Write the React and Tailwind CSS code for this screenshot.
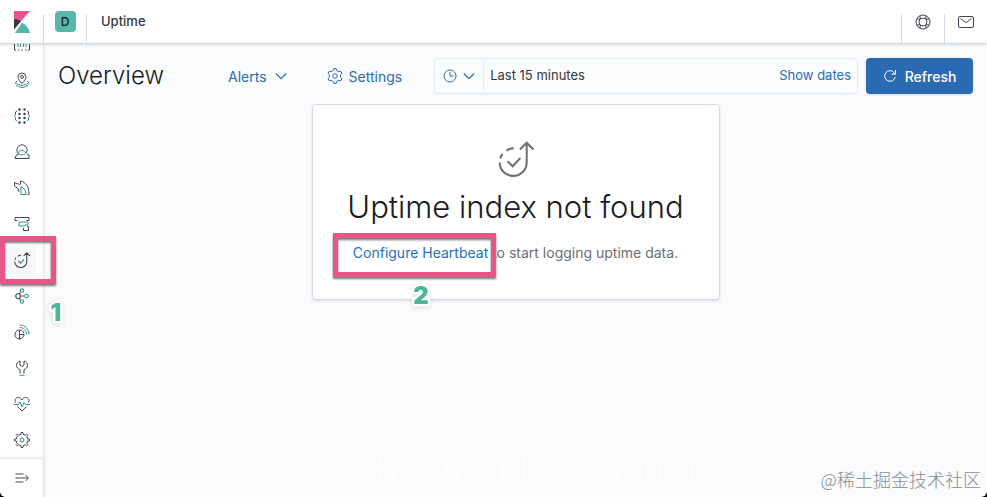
import React from 'react'

const DARK = '#43464e'
const TEAL = '#2f9484'

function Icon({ children, size = 'size-4', box = '0 0 32 32', width = 2 }) {
  return (
    <svg viewBox={box} className={size} fill="none" stroke={DARK} strokeWidth={width} aria-hidden="true">
      {children}
    </svg>
  )
}

// Outline of a cog centred on 16,16
function cog(teeth, outer, inner, top, bottom) {
  const step = (Math.PI * 2) / teeth
  const at = (r, a) => `${(16 + r * Math.sin(a)).toFixed(2)} ${(16 - r * Math.cos(a)).toFixed(2)}`
  const points = []
  for (let i = 0; i < teeth; i++) {
    const a = i * step
    points.push(at(inner, a - step * bottom), at(outer, a - step * top), at(outer, a + step * top), at(inner, a + step * bottom))
  }
  return `M${points.join('L')}Z`
}

const COG_8 = cog(8, 15, 11.5, 0.16, 0.24)
const COG_6 = cog(6, 15, 11.5, 0.16, 0.28)

const CanvasIcon = () => (
  <Icon>
    <path d="M1 4h30v24h-3M1 4v24h3M8 28h3M15 28h3M22 28h3" />
    <path stroke={TEAL} d="M8 22v-6M13 22V12M19 22v-8M24 22V12" />
  </Icon>
)

const MapsIcon = () => (
  <Icon>
    <path d="M16 23c-5-5-8-9-8-13a8 8 0 0 1 16 0c0 4-3 8-8 13z" />
    <circle cx="16" cy="10" r="3" />
    <path stroke={TEAL} d="M6 18l-4 4c4 0 4 3 7 3s4 2 7 2 4-2 7-2 3-3 7-3l-4-4M4 27c4 0 6 4 12 4s8-4 12-4" />
  </Icon>
)

const MachineLearningIcon = () => (
  <Icon>
    <g fill={DARK} stroke="none">
      <circle cx="11" cy="3" r="2.500" />
      <circle cx="21" cy="3" r="2.500" />
      <circle cx="11" cy="12" r="2.500" />
      <circle cx="21" cy="12" r="2.500" />
      <circle cx="11" cy="20" r="2.500" />
      <circle cx="21" cy="20" r="2.500" />
      <circle cx="11" cy="29" r="2.500" />
      <circle cx="21" cy="29" r="2.500" />
    </g>
    <path d="M6 6L3 8v5M26 6l3 2v5" />
    <path stroke={TEAL} d="M6 26l-3-2v-5l-2-3 2-3M26 26l3-2v-5l2-3-2-3" />
  </Icon>
)

const MetricsIcon = () => (
  <Icon>
    <path d="M8 18a10 10 0 1 1 16 0M10 20l-6 3-2 6h28v-7l-4-2" />
    <path stroke={TEAL} d="M8 18c3-7 13-7 16 0-3 5-13 5-16 0z" />
  </Icon>
)

const LogsIcon = () => (
  <Icon>
    <path d="M11 22H8l1-4-8-6V5l10 4" />
    <path d="M13 9V2c11 3 17 11 17 27h-3" />
    <path stroke={TEAL} d="M14 13v16h10c0-8-4-13-10-16z" />
  </Icon>
)

const ApmIcon = () => (
  <Icon>
    <path d="M7 9H2V3h28v6h-5M19 24v5h10v-8h-3" />
    <path stroke={TEAL} d="M10 12h18v6h-6l-1 2H10z" />
  </Icon>
)

const UptimeGlyph = ({ size, stroke = DARK, width }) => (
  <svg viewBox="0 0 32 32" className={size} fill="none" stroke={stroke} strokeWidth={width} aria-hidden="true">
    <path d="M1.500 19a11.500 11.500 0 0 0 24 0V2M19.500 7.500l6-6 6 6" />
    <path d="M2 15.500a12 12 0 0 1 2-4M7.500 8.500A12 12 0 0 1 14 6.500" />
    <path stroke={stroke === DARK ? TEAL : stroke} d="M8.500 18l4.500 4.500 7-7.500" />
  </svg>
)

const SiemIcon = () => (
  <Icon width={2.2}>
    <path d="M12 12.500A5 5 0 1 0 12 20M12 9v14M12 16h8" />
    <circle cx="16" cy="5" r="3.500" stroke={TEAL} />
    <circle cx="25" cy="16" r="3.500" stroke={TEAL} />
    <circle cx="16" cy="27" r="3.500" stroke={TEAL} />
  </Icon>
)

const GraphIcon = () => (
  <Icon>
    <path d="M11 12a9 9 0 1 0 9 9h-9zM11 21v9M12 12c4 0 7 3 8 7" />
    <path stroke={TEAL} d="M11 7c8 0 14 6 14 14M11 2c11 0 19 8 19 19" />
  </Icon>
)

const WrenchIcon = () => (
  <Icon>
    <path d="M12 27v-8c-4-1-7-4-7-8s3-8 7-9v8l4 3 4-3V2c4 1 7 5 7 9s-3 7-7 8v8" />
    <path stroke={TEAL} d="M11 30.500h10" />
  </Icon>
)

const HeartIcon = () => (
  <Icon>
    <path d="M3 13C0 6 5 3 9 3c3 0 6 2 7 5 1-3 4-5 7-5 4 0 9 3 6 10M7 21l9 9 9-9" />
    <path stroke={TEAL} d="M0 17h9l3-5 4 10 4-9 3 4h9" />
  </Icon>
)

const ManagementIcon = () => (
  <Icon>
    <path strokeLinejoin="round" d={COG_8} />
    <circle cx="16" cy="16" r="4" stroke={TEAL} />
  </Icon>
)

const NAV = [
  { label: 'Canvas', icon: <CanvasIcon /> },
  { label: 'Maps', icon: <MapsIcon /> },
  { label: 'Machine Learning', icon: <MachineLearningIcon /> },
  { label: 'Metrics', icon: <MetricsIcon /> },
  { label: 'Logs', icon: <LogsIcon /> },
  { label: 'APM', icon: <ApmIcon /> },
  { label: 'Uptime', icon: <UptimeGlyph size="size-4" width={2.2} />, active: true },
  { label: 'SIEM', icon: <SiemIcon /> },
  { label: 'Graph', icon: <GraphIcon /> },
  { label: 'Dev Tools', icon: <WrenchIcon /> },
  { label: 'Stack Monitoring', icon: <HeartIcon /> },
  { label: 'Management', icon: <ManagementIcon /> },
]

const Chevron = () => (
  <svg viewBox="0 0 12 12" className="size-3" fill="none" stroke="currentColor" strokeWidth="1.200" aria-hidden="true">
    <path d="M.8 3.500L6 8.700l5.200-5.200" />
  </svg>
)

// Pink frame used for the tutorial steps
const Frame = ({ className }) => (
  <span
    className={`pointer-events-none absolute z-20 border-5 border-[#e85688] drop-shadow-[0_2px_1px_rgba(60,60,60,0.7)] ${className}`}
  />
)

const Step = ({ n, className }) => (
  <svg viewBox="0 0 24 28" className={`pointer-events-none absolute z-20 h-7 w-6 drop-shadow-sm ${className}`}>
    <text
      x="12"
      y="23"
      textAnchor="middle"
      className="fill-[#4db597] stroke-white font-black"
      fontSize="24"
      strokeWidth="5"
      strokeLinejoin="round"
      paintOrder="stroke"
    >
      {n}
    </text>
  </svg>
)

function Header() {
  return (
    <header className="relative z-10 flex h-11 shrink-0 items-stretch border-b border-[#d3dae0] bg-white shadow-sm">
      <a href="#home" aria-label="Kibana" className="flex w-[43px] items-center justify-center">
        <svg viewBox="0 0 16 22" className="h-[22px] w-4" aria-hidden="true">
          <path fill="#e8558c" d="M0 0h16L0 18z" />
          <path fill="#343741" d="M0 8c3 0 5 1 7 2.300L0 18.500z" />
          <path fill="#4fb9a5" d="M8 11.500c4 2.300 7 6 8 10.500H1z" />
        </svg>
      </a>
      <div className="mt-3.5 border-l border-[#d3dae6]" />
      <button aria-label="Default space" className="flex w-[42px] items-center justify-center">
        <span className="flex size-[21px] items-center justify-center rounded bg-[#54b9a6] text-xs font-medium text-[#1a1c21]">
          D
        </span>
      </button>
      <div className="mt-3.5 border-l border-[#d3dae6]" />
      <span className="self-center pl-3.5 text-[13px] font-medium text-[#343741]">Uptime</span>
      <div className="ml-auto flex">
        <button aria-label="Help" className="mt-3.5 flex w-[43px] justify-center border-l border-[#d3dae6]">
          <Icon box="0 0 16 16" width={1}>
            <circle cx="8" cy="8" r="7" />
            <circle cx="8" cy="8" r="4" />
            <path d="M5.300 5L5 1.700M10.700 5L11 1.700M5.300 11L5 14.300M10.700 11l.3 3.300M5 5.300L1.700 5M11 5.300l3.300-.3M5 10.700l-3.300.3M11 10.700l3.300.3" />
          </Icon>
        </button>
        <button aria-label="News" className="mt-3.5 flex w-[43px] justify-center border-l border-[#d3dae6]">
          <Icon box="0 0 16 16" width={1}>
            <rect x=".500" y="2.500" width="15" height="11" rx="1.500" />
            <path d="M2.500 4.500L8 8.700l5.500-4.200" />
          </Icon>
        </button>
      </div>
    </header>
  )
}

function Sidebar() {
  return (
    <aside className="flex w-11 shrink-0 flex-col border-r border-[#e6eaf0] bg-white shadow-sm">
      <nav className="flex min-h-0 flex-1 flex-col justify-end">
        {NAV.map(({ label, icon, active }) => (
          <div key={label} className="relative flex h-9 shrink-0 items-center justify-center">
            <a
              href="#nav"
              aria-label={label}
              className={`flex size-7 items-center justify-center rounded ${active ? 'bg-[#f5f7fa]' : ''}`}
            >
              {icon}
            </a>
            {active && (
              <>
                <Frame className="-top-1.5 left-0 h-12 w-14" />
                <Step n="1" className="top-14 left-11" />
              </>
            )}
          </div>
        ))}
      </nav>
      <button
        aria-label="Expand menu"
        className="flex h-[39px] shrink-0 items-center justify-center border-t border-[#e6eaf0] shadow-[0_-1px_3px_rgba(0,0,0,0.08)]"
      >
        <Icon box="0 0 16 16" width={1}>
          <path d="M1.500 4h8M1.500 8H14M1.500 12h8M11.500 5L14.500 8l-3 3" />
        </Icon>
      </button>
    </aside>
  )
}

function Toolbar() {
  return (
    <div className="flex h-9 items-center text-[#2a6cb0]">
      <h1 className="w-[170px] text-2xl leading-9 font-light text-[#1a1c21]">Overview</h1>
      <button className="flex items-center gap-2 text-[14px]">
        Alerts
        <Chevron />
      </button>
      <a href="#settings" className="ml-10 flex items-center gap-1.5 text-[14px]">
        <svg viewBox="0 0 32 32" className="size-4" fill="none" stroke="currentColor" strokeWidth="2" aria-hidden="true">
          <path strokeLinejoin="round" d={COG_6} />
          <circle cx="16" cy="16" r="4.500" />
        </svg>
        Settings
      </a>
      <div className="ml-8 flex h-9 flex-1 items-stretch rounded-sm border border-[#e6eaf1] bg-[#fbfcfd] text-[13px] shadow-[0_1px_1px_rgba(0,0,0,0.04)]">
        <button aria-label="Date quick select" className="flex w-[49px] items-center justify-center gap-1.5 border-r border-[#e6eaf1]">
          <svg viewBox="0 0 14 14" className="size-3.5" fill="none" stroke="currentColor" aria-hidden="true">
            <circle cx="7" cy="7" r="6" />
            <path d="M7 3v4h3.500" />
          </svg>
          <Chevron />
        </button>
        <button className="flex flex-1 items-center justify-between px-1.5">
          <span className="text-[#343741]">Last 15 minutes</span>
          <span>Show dates</span>
        </button>
      </div>
      <button className="ml-2 flex h-9 w-[107px] items-center justify-center gap-2 rounded-sm bg-[#2a6ab3] text-[14px] font-medium text-white shadow-sm">
        <svg viewBox="0 0 14 14" className="size-3.5" fill="none" stroke="currentColor" aria-hidden="true">
          <path d="M12.200 8A5.300 5.300 0 1 1 11 3.500L12.300 5M12.500 1v4.200H8.500" />
        </svg>
        Refresh
      </button>
    </div>
  )
}

function EmptyState() {
  return (
    <section className="mx-auto mt-2.5 flex w-[408px] max-w-full flex-col items-center rounded border border-[#d3dae6] bg-white pt-9 pb-[34px] shadow-sm">
      <UptimeGlyph size="size-9" stroke="#6b6e75" width={1.8} />
      <h2 className="mt-1.5 text-[31px] leading-[48px] font-light whitespace-nowrap text-[#1a1c21]">
        Uptime index not found
      </h2>
      <p className="mt-2.5 text-[14px] leading-6 whitespace-nowrap text-[#6b6e75]">
        <span className="relative inline-block">
          <a href="#heartbeat" className="text-[#1f6fbe]">Configure Heartbeat</a>
          <Frame className="-top-2 -right-2 -bottom-3 -left-5" />
          <Step n="2" className="top-10 left-14" />
        </span>{' '}
        to start logging uptime data.
      </p>
    </section>
  )
}

export default function App() {
  return (
    <div className="h-screen bg-black font-['Inter',sans-serif]">
      <div className="relative flex h-full flex-col overflow-hidden rounded-b-md bg-[#fafbfd]">
        <Header />
        <div className="flex min-h-0 flex-1">
          <Sidebar />
          <main className="min-w-0 flex-1 px-3.5 pt-3.5">
            <Toolbar />
            <EmptyState />
          </main>
        </div>
        <div className="pointer-events-none absolute bottom-2 left-[376px] text-4xl text-white/70">https://blog.csdn.net/</div>
        <div className="pointer-events-none absolute right-1.5 bottom-1.5 font-['Noto_Sans_CJK_SC',sans-serif] text-[18px] leading-6 font-light text-[#8b8d91]">
          @稀土掘金技术社区
        </div>
      </div>
    </div>
  )
}
